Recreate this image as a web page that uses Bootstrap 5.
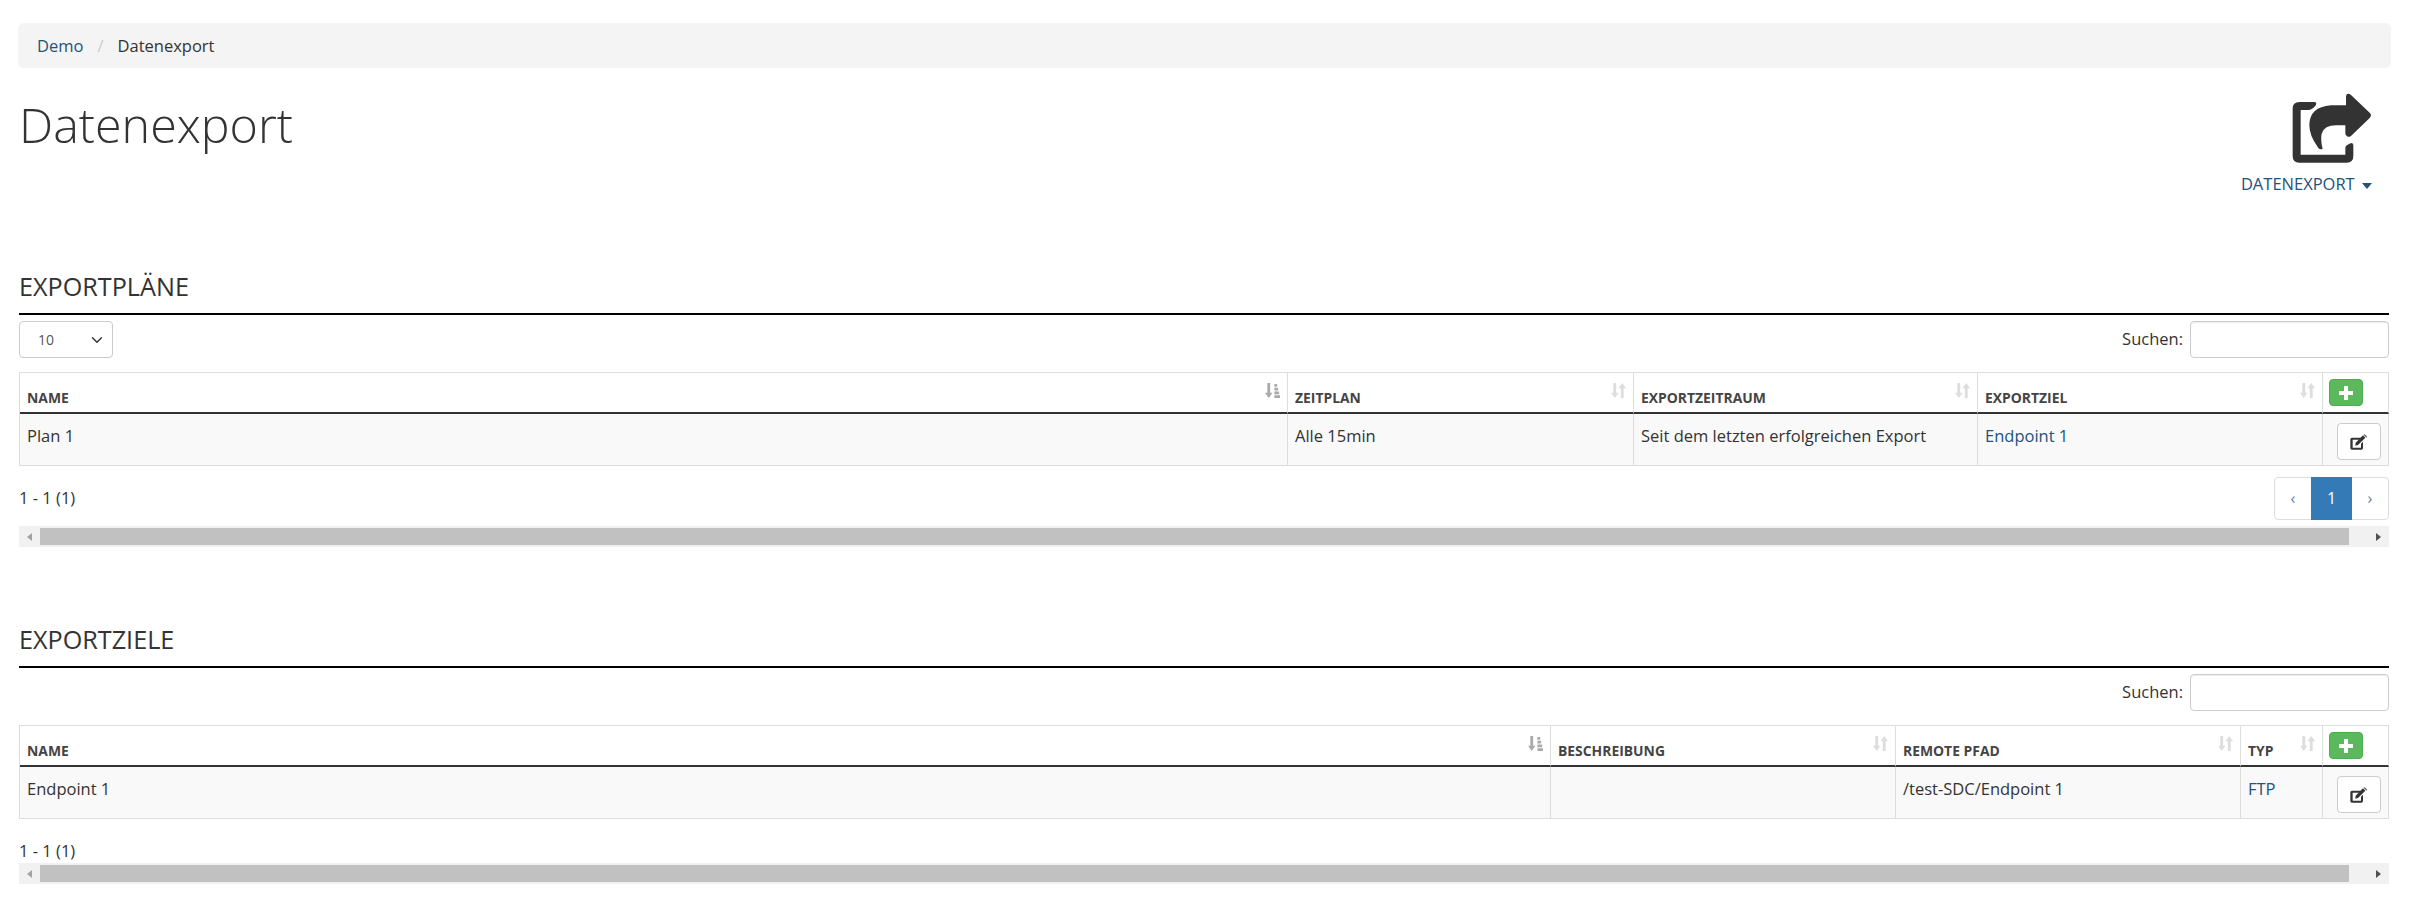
<!DOCTYPE html>
<html lang="de">
<head>
<meta charset="utf-8">
<title>Datenexport</title>
<link href="https://cdn.jsdelivr.net/npm/bootstrap@5.3.0/dist/css/bootstrap.min.css" rel="stylesheet">
<style>
body{font-family:"Open Sans","Noto Sans",sans-serif;font-size:16.5px;color:#333;background:#fff;padding:23px 29px 0 19px;overflow:hidden}
a{color:#23527c;text-decoration:none}
.crumbs{background:#f4f4f4;height:45px;margin:0 -2px 0 -1px;padding:2px 19px 0;border-radius:6px;align-items:center;--bs-breadcrumb-margin-bottom:0;--bs-breadcrumb-divider-color:#ccc;--bs-breadcrumb-item-padding-x:14px;--bs-breadcrumb-item-active-color:#333}
.pagehead{height:192px}
.pagetitle{font-size:48.4px;font-weight:300;margin:24px 0 0 0;line-height:64px;color:#333}
.shareblock{padding-top:24px;text-align:right;margin-right:17px}
.shareicon{width:81px;height:72px;display:block;margin-left:auto;fill:#333}
.sharelink{display:block;margin-top:10px;line-height:20px;font-size:16.5px;margin-right:0;text-transform:uppercase}
.caretdown{display:inline-block;width:0;height:0;border-left:5.5px solid transparent;border-right:5.5px solid transparent;border-top:6px solid #23527c;vertical-align:middle;margin-left:3px}
.secthead{font-size:25.2px;font-weight:400;line-height:30px;height:55px;padding-top:11px;margin:0;border-bottom:2px solid #000;color:#333}
.toolrow{height:37px;margin-top:6px}
.lensel{width:94px;height:37px;padding:0 0 0 18px;font-size:14px;border:1px solid #ccc;border-radius:4px;color:#555;background-position:right 7px center;background-size:16px 12px}
.searchlabel{margin:0 7px 0 0}
.searchbox{width:199px;height:37px;border:1px solid #ccc;border-radius:4px;box-shadow:inset 0 1px 1px rgba(0,0,0,.075)}
.grid{table-layout:fixed;width:100%;border-collapse:separate;border-spacing:0;border:1px solid #ddd;border-width:1px 0 0 1px;margin:14px 0 0 0;color:#333}
.grid th,.grid td{border-right:1px solid #ddd;vertical-align:top}
.grid th{height:40px;border-bottom:2px solid #333;padding:0 7px 0 7px;font-size:13.9px;font-weight:700;text-transform:uppercase;color:#444;letter-spacing:0}
.grid td{height:52px;border-bottom:1px solid #ddd;background:#f9f9f9;padding:11px 7px 0;line-height:22px}
.thwrap{display:flex;justify-content:space-between;height:39px}
.thwrap>span{align-self:flex-end;line-height:20px;padding-bottom:4px}
.sorticon{width:15px;height:15px;margin-top:10px;margin-right:0;flex:none;fill:#ddd}
.sorticon.isactive{fill:#aaa}
.addbtn{width:34px;height:27px;background:#5cb85c;border:1px solid #4cae4c;border-radius:4px;padding:0;display:block;margin:6px 0 0 0}
.addbtn svg{width:14px;height:14px;fill:#fff;display:block;margin:auto}
.editbtn{width:44px;height:37px;background:#fff;border:1px solid #ccc;border-radius:4px;padding:0;display:block;margin:9px 0 0 8px}
.editbtn svg{width:18px;height:16px;fill:#333;display:block;margin:auto}
.grid .actioncol{padding:0 0 0 6px}
.infotext{line-height:20px}
.pager{--bs-pagination-padding-x:0;--bs-pagination-padding-y:0;--bs-pagination-font-size:16px;--bs-pagination-color:#5a7fa3;--bs-pagination-border-color:#ddd;--bs-pagination-active-bg:#337ab7;--bs-pagination-active-border-color:#337ab7;--bs-pagination-border-radius:4px;margin:0}
.pager .page-link{width:38px;height:43px;line-height:41px;text-align:center}
.pager .page-item:nth-child(2) .page-link{width:41px}
.fakebar{height:21px;background:#f1f1f1;padding:2px 0;align-items:stretch}
.barend{width:21px;flex:none;display:flex;align-items:center;justify-content:center}
.barthumb{flex:1;background:#c1c1c1;margin-right:19px}
.bartri{width:0;height:0;border-top:4.5px solid transparent;border-bottom:4.5px solid transparent}
.bartri.toleft{border-right:5px solid #a3a3a3}
.bartri.toright{border-left:5px solid #505050}
.firstfoot{height:60px;padding-top:11px}
.firstinfo{padding-top:11px}
.secondfoot{height:44px;padding-top:22px;line-height:20px}
.gapblock{height:66px}
</style>
</head>
<body>
<svg width="0" height="0" class="d-block" aria-hidden="true">
<symbol id="ic-sort" viewBox="0 0 16 16"><path d="M2.5 0h3v10.500h2.500L4 16 0 10.500h2.500zM10.500 16V5.500H8L12 0l4 5.500h-2.500V16z"/></symbol>
<symbol id="ic-sorted" viewBox="0 0 16 16"><path d="M2.500 0h3v10.500h2.500L4 16 0 10.500h2.500zM10 1h3v3h-3zM10 5h4v3h-4zM10 9h5v3h-5zM10 13h6v3h-6z"/></symbol>
<symbol id="ic-edit" viewBox="0 0 54 48"><path d="M6 11H34L28 17H8V41H33V29L39 23V42Q39 47 34 47H6Q1 47 1 42V16Q1 11 6 11Z"/><path d="M17 26L39 4 46 11 24 33 16 35ZM41 2Q43 0 45 2L50 7Q52 9 50 11L48 9 41 2Z"/></symbol>
<symbol id="ic-plus" viewBox="0 0 14 14"><path d="M5 0h4v5h5v4H9v5H5V9H0V5h5z"/></symbol>
</svg>

<nav aria-label="breadcrumb">
<ol class="breadcrumb crumbs">
<li class="breadcrumb-item"><a href="#">Demo</a></li>
<li class="breadcrumb-item active" aria-current="page">Datenexport</li>
</ol>
</nav>

<div class="pagehead d-flex justify-content-between align-items-start">
<h1 class="pagetitle">Datenexport</h1>
<div class="shareblock">
<svg class="shareicon" viewBox="0 0 243 216"><path d="M70 30H25Q5 30 5 50V192Q5 212 25 212H167Q187 212 187 192V160Q187 153 180 153L170 158Q163 160 163 168V188H29V54H55Q70 48 75 38Q78 30 70 30Z"/><path d="M165 15Q165 5 172 5Q176 5 180 9L236 62Q244 70 236 78L180 132Q172 138 165 130Q163 128 163 122V100H135Q100 100 92 125Q88 145 95 170Q85 175 80 165Q55 130 55 100Q55 45 120 40H165Z"/></svg>
<a class="sharelink" href="#">Datenexport <span class="caretdown"></span></a>
</div>
</div>

<h2 class="secthead">EXPORTPLÄNE</h2>
<div class="toolrow d-flex justify-content-between align-items-center">
<select class="form-select lensel" aria-label="Anzahl"><option>10</option></select>
<div class="d-flex align-items-center"><label class="searchlabel">Suchen:</label><input class="searchbox" type="search" aria-label="Suchen"></div>
</div>
<table class="grid">
<colgroup><col style="width:1268px"><col style="width:346px"><col style="width:344px"><col style="width:345px"><col></colgroup>
<thead><tr>
<th><div class="thwrap"><span>Name</span><svg class="sorticon isactive"><use href="#ic-sorted"/></svg></div></th>
<th><div class="thwrap"><span>Zeitplan</span><svg class="sorticon"><use href="#ic-sort"/></svg></div></th>
<th><div class="thwrap"><span>Exportzeitraum</span><svg class="sorticon"><use href="#ic-sort"/></svg></div></th>
<th><div class="thwrap"><span>Exportziel</span><svg class="sorticon"><use href="#ic-sort"/></svg></div></th>
<th class="actioncol"><button class="addbtn" type="button" aria-label="Neu"><svg><use href="#ic-plus"/></svg></button></th>
</tr></thead>
<tbody><tr>
<td>Plan 1</td><td>Alle 15min</td><td>Seit dem letzten erfolgreichen Export</td><td><a href="#">Endpoint 1</a></td>
<td class="actioncol"><button class="editbtn" type="button" aria-label="Bearbeiten"><svg><use href="#ic-edit"/></svg></button></td>
</tr></tbody>
</table>
<div class="firstfoot d-flex justify-content-between align-items-start">
<div class="infotext firstinfo">1 - 1 (1)</div>
<ul class="pagination pager">
<li class="page-item"><a class="page-link" href="#">‹</a></li>
<li class="page-item active"><a class="page-link" href="#">1</a></li>
<li class="page-item"><a class="page-link" href="#">›</a></li>
</ul>
</div>
<div class="fakebar d-flex"><div class="barend"><span class="bartri toleft"></span></div><div class="barthumb"></div><div class="barend"><span class="bartri toright"></span></div></div>

<div class="gapblock"></div>
<h2 class="secthead">EXPORTZIELE</h2>
<div class="toolrow d-flex justify-content-end align-items-center">
<div class="d-flex align-items-center"><label class="searchlabel">Suchen:</label><input class="searchbox" type="search" aria-label="Suchen"></div>
</div>
<table class="grid">
<colgroup><col style="width:1531px"><col style="width:345px"><col style="width:345px"><col style="width:82px"><col></colgroup>
<thead><tr>
<th><div class="thwrap"><span>Name</span><svg class="sorticon isactive"><use href="#ic-sorted"/></svg></div></th>
<th><div class="thwrap"><span>Beschreibung</span><svg class="sorticon"><use href="#ic-sort"/></svg></div></th>
<th><div class="thwrap"><span>Remote Pfad</span><svg class="sorticon"><use href="#ic-sort"/></svg></div></th>
<th><div class="thwrap"><span>Typ</span><svg class="sorticon"><use href="#ic-sort"/></svg></div></th>
<th class="actioncol"><button class="addbtn" type="button" aria-label="Neu"><svg><use href="#ic-plus"/></svg></button></th>
</tr></thead>
<tbody><tr>
<td>Endpoint 1</td><td></td><td>/test-SDC/Endpoint 1</td><td><a href="#">FTP</a></td>
<td class="actioncol"><button class="editbtn" type="button" aria-label="Bearbeiten"><svg><use href="#ic-edit"/></svg></button></td>
</tr></tbody>
</table>
<div class="secondfoot infotext">1 - 1 (1)</div>
<div class="fakebar d-flex"><div class="barend"><span class="bartri toleft"></span></div><div class="barthumb"></div><div class="barend"><span class="bartri toright"></span></div></div>

<script src="https://cdn.jsdelivr.net/npm/bootstrap@5.3.0/dist/js/bootstrap.bundle.min.js"></script>
</body>
</html>
